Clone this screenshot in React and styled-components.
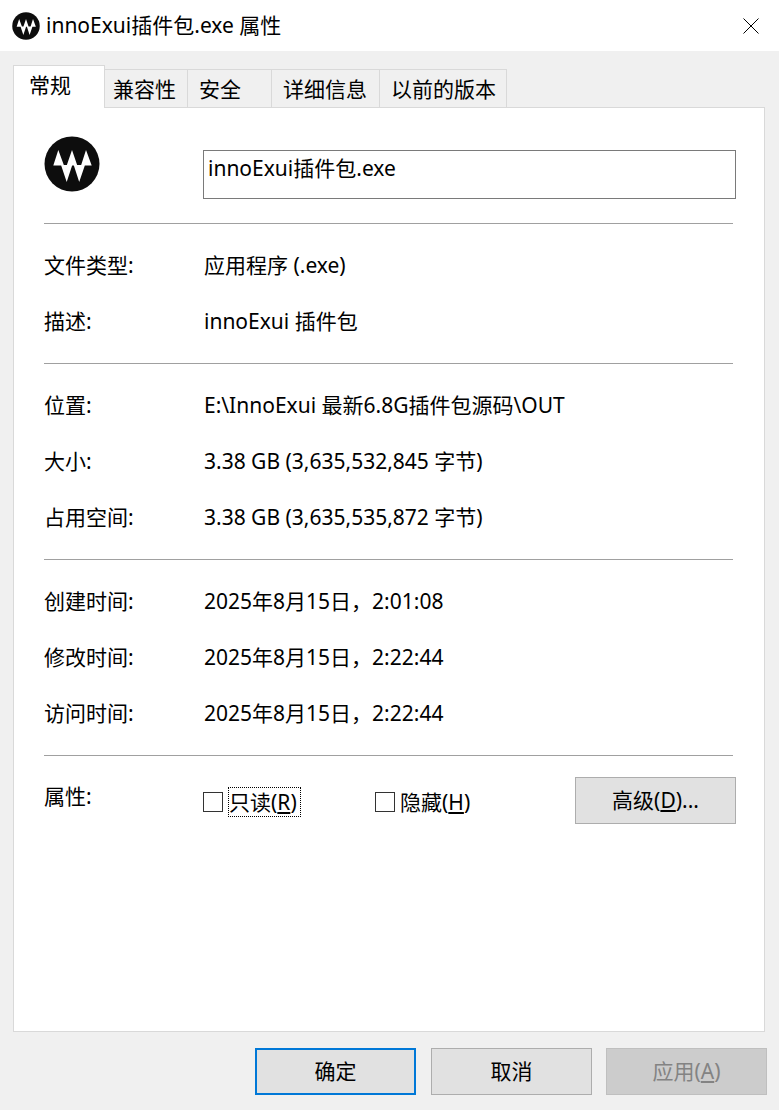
import React from 'react'
import styled, { createGlobalStyle } from 'styled-components'

const GlobalStyle = createGlobalStyle`
  html, body {
    margin: 0;
    padding: 0;
    background: #f0f0f0;
  }
  * {
    box-sizing: border-box;
  }
`

const Dialog = styled.div`
  width: 779px;
  height: 1110px;
  display: flex;
  flex-direction: column;
  background: #f0f0f0;
  color: #000;
  font-family: 'Noto Sans', 'Noto Sans CJK SC', sans-serif;
  font-size: 21px;
  line-height: 28px;
`

const TitleBar = styled.div`
  height: 51px;
  flex: none;
  display: flex;
  align-items: center;
  gap: 6px;
  padding: 0 20px 0 12px;
  background: #fff;
`

const Title = styled.div`
  flex: 1;
  padding-bottom: 2px;
  white-space: nowrap;
`

const Body = styled.div`
  flex: 1;
  display: flex;
  flex-direction: column;
  padding: 15px 14px 0 13px;
`

const Tabs = styled.div`
  height: 42px;
  flex: none;
  display: flex;
  align-items: flex-end;
  margin-bottom: -1px;
`

const Tab = styled.div`
  width: ${(p) => p.$width}px;
  height: ${(p) => (p.$active ? 43 : 39)}px;
  padding: 5px 0 0 ${(p) => p.$pad}px;
  background: ${(p) => (p.$active ? '#fff' : '#f0f0f0')};
  border: 1px solid #d9d9d9;
  border-left-width: ${(p) => (p.$active ? 1 : 0)}px;
  border-bottom-width: ${(p) => (p.$active ? 0 : 1)}px;
  white-space: nowrap;
  position: relative;
  z-index: ${(p) => (p.$active ? 1 : 0)};
`

const Panel = styled.div`
  height: 925px;
  flex: none;
  padding: 0 31px 0 30px;
  background: #fff;
  border: 1px solid #d9d9d9;
`

const Header = styled.div`
  height: 115px;
  display: grid;
  grid-template-columns: 159px 533px;
  align-items: start;
`

const BigLogo = styled.div`
  width: 56px;
  height: 56px;
  margin-top: 28px;
`

const NameBox = styled.div`
  height: 49px;
  margin-top: 42px;
  padding: 3px 4px;
  border: 1px solid #7a7a7a;
  white-space: nowrap;
`

const Section = styled.div`
  padding: 13px 0 14px;
  border-top: 1px solid #a0a0a0;
`

const Row = styled.div`
  height: 56px;
  display: grid;
  grid-template-columns: 160px 1fr;
  align-items: center;
  white-space: nowrap;
`

const AttrSection = styled.div`
  height: 70px;
  padding-top: 21px;
  display: flex;
  align-items: flex-start;
  border-top: 1px solid #a0a0a0;
`

const AttrLabel = styled.div`
  width: 159px;
  flex: none;
  margin-top: 5px;
`

const Check = styled.div`
  width: ${(p) => p.$width}px;
  flex: none;
  height: 30px;
  margin-top: 10px;
  display: flex;
  align-items: center;
  gap: ${(p) => (p.$focused ? 5 : 4)}px;
  white-space: nowrap;
`

const Box = styled.span`
  width: 20px;
  height: 20px;
  flex: none;
  border: 1px solid #333;
  background: #fff;
`

const CheckText = styled.span`
  height: 30px;
  padding: 0 3px 0 0;
  line-height: 30px;
  border: 1px ${(p) => (p.$focused ? 'dotted #000' : 'solid transparent')};
  display: flex;
  align-items: center;
`

const Button = styled.div`
  width: 161px;
  height: 47px;
  flex: none;
  display: flex;
  align-items: center;
  justify-content: center;
  padding-bottom: 2px;
  margin-right: ${(p) => (p.$primary ? 1 : 0)}px;
  background: ${(p) => (p.$disabled ? '#cccccc' : '#e1e1e1')};
  color: ${(p) => (p.$disabled ? '#838383' : '#000')};
  border: ${(p) => (p.$primary ? '2px solid #0078d7' : `1px solid ${p.$disabled ? '#bfbfbf' : '#adadad'}`)};
`

const AdvancedButton = styled(Button)`
  margin-left: auto;
  margin-right: -3px;
`

const Footer = styled.div`
  display: flex;
  justify-content: flex-end;
  gap: 14px;
  margin-top: 16px;
  margin-right: -2px;
`

const Logo = ({ size }) => (
  <svg width={size} height={size} viewBox="0 0 56 56">
    <circle cx="28" cy="28" r="27.5" fill="#0d0d0d" />
    <path
      fill="#fff"
      d="M14.3 14 L20 29.5 H9.3 Z
         M28 14 L33.3 29.5 H22.7 Z
         M42 14 L47.7 29.5 H37 Z
         M17 29 H28.3 L22.7 46 Z
         M29.7 29 H41 L35.2 46 Z"
    />
  </svg>
)

const CloseIcon = () => (
  <svg width="16" height="16" viewBox="0 0 16 16">
    <path d="M0.5 0.5 L15.5 15.5 M15.5 0.5 L0.5 15.5" stroke="#000" strokeWidth="1" fill="none" />
  </svg>
)

const tabs = [
  { label: '常规', width: 92, pad: 15, active: true },
  { label: '兼容性', width: 83, pad: 8 },
  { label: '安全', width: 84, pad: 11 },
  { label: '详细信息', width: 108, pad: 11 },
  { label: '以前的版本', width: 127, pad: 11 },
]

const sections = [
  [
    ['文件类型:', '应用程序 (.exe)'],
    ['描述:', 'innoExui 插件包'],
  ],
  [
    ['位置:', 'E:\\InnoExui 最新6.8G插件包源码\\OUT'],
    ['大小:', '3.38 GB (3,635,532,845 字节)'],
    ['占用空间:', '3.38 GB (3,635,535,872 字节)'],
  ],
  [
    ['创建时间:', '2025年8月15日\uFF0C2:01:08'],
    ['修改时间:', '2025年8月15日\uFF0C2:22:44'],
    ['访问时间:', '2025年8月15日\uFF0C2:22:44'],
  ],
]

export default function App() {
  return (
    <Dialog>
      <GlobalStyle />
      <TitleBar>
        <Logo size={28} />
        <Title>innoExui插件包.exe 属性</Title>
        <CloseIcon />
      </TitleBar>
      <Body>
        <Tabs>
          {tabs.map((t) => (
            <Tab key={t.label} $active={t.active} $width={t.width} $pad={t.pad}>
              {t.label}
            </Tab>
          ))}
        </Tabs>
        <Panel>
          <Header>
            <BigLogo>
              <Logo size={56} />
            </BigLogo>
            <NameBox>innoExui插件包.exe</NameBox>
          </Header>
          {sections.map((rows, i) => (
            <Section key={i}>
              {rows.map(([label, value]) => (
                <Row key={label}>
                  <span>{label}</span>
                  <span>{value}</span>
                </Row>
              ))}
            </Section>
          ))}
          <AttrSection>
            <AttrLabel>属性:</AttrLabel>
            <Check $width={172} $focused>
              <Box />
              <CheckText $focused>
                只读(<u>R</u>)
              </CheckText>
            </Check>
            <Check $width={180}>
              <Box />
              <CheckText>
                隐藏(<u>H</u>)
              </CheckText>
            </Check>
            <AdvancedButton>
              高级(<u>D</u>)...
            </AdvancedButton>
          </AttrSection>
        </Panel>
        <Footer>
          <Button $primary>确定</Button>
          <Button>取消</Button>
          <Button $disabled>
            应用(<u>A</u>)
          </Button>
        </Footer>
      </Body>
    </Dialog>
  )
}
